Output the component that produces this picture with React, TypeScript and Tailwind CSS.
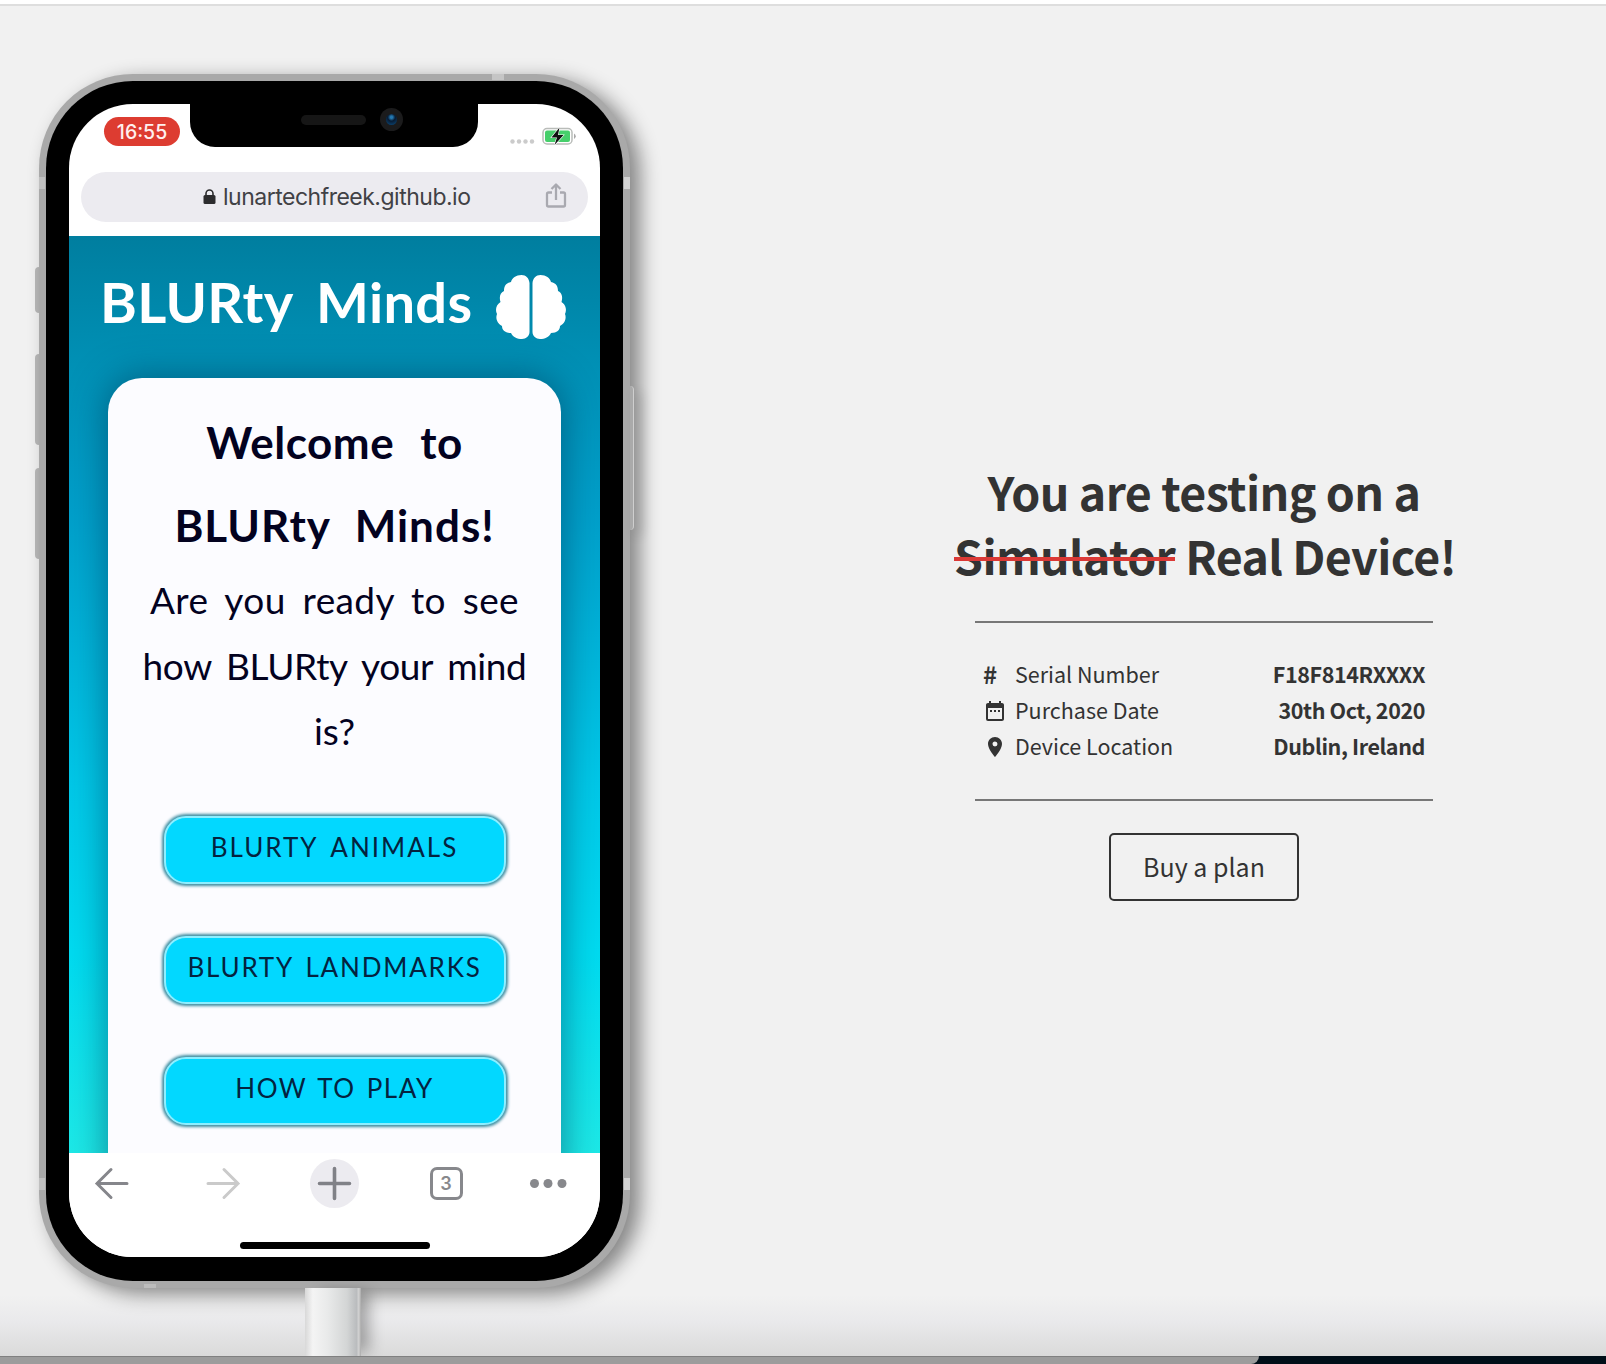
import React from "react";
import { MdDateRange, MdPlace } from "react-icons/md";

const hand = "font-['Lato','Open_Sans',sans-serif]";

function BrainIcon() {
  return (
    <svg viewBox="0 0 72 66" className="h-[66px] w-[72px]" fill="#fff">
      <path d="M34.500 9C34 4 31 1 26.500 1C21 1 17 4 16 8C11 9 9 12 9 17C5 19 4 23 5.500 28C1 31 0 36 2 40C0 45 3 50 7 52C7 56 10 59 16 59C18 63 22 65 27 65C31 65 34.500 62 34.500 58Z" />
      <path d="M37.500 9C38 4 41 1 45.500 1C51 1 55 4 56 8C61 9 63 12 63 17C67 19 68 23 66.500 28C71 31 72 36 70 40C72 45 69 50 65 52C65 56 62 59 56 59C54 63 50 65 45 65C41 65 37.500 62 37.500 58Z" />
    </svg>
  );
}

function StatusBar() {
  return (
    <div className="relative h-[68px] shrink-0">
      <div className="absolute left-[35px] top-[13px] flex h-[29px] w-[76px] items-center justify-center rounded-full bg-[#dd3c31] pt-[2px] font-['Inter',sans-serif] text-[19.5px] font-medium text-[#fff0ee]">
        16:55
      </div>
      <div className="absolute left-[121px] top-0 h-[43px] w-[288px] rounded-b-[25px] bg-black">
        <div className="absolute left-[111px] top-[11px] h-[10px] w-[65px] rounded-full bg-[#161616]" />
        <div className="absolute left-[190px] top-[4px] flex h-[23px] w-[23px] items-center justify-center rounded-full bg-[#1b1b1c]">
          <div className="h-[11px] w-[11px] rounded-full bg-[radial-gradient(circle_at_50%_30%,#2478b0_0_12%,#071b33_40%,#0b4675_90%)]" />
        </div>
      </div>
      <svg viewBox="0 0 68 20" className="absolute left-[440px] top-[22px] h-5 w-[68px]">
        <g fill="#cbcbcb">
          <circle cx="3.500" cy="15.500" r="2.200" />
          <circle cx="10" cy="15.500" r="2.200" />
          <circle cx="16.500" cy="15.500" r="2.200" />
          <circle cx="23" cy="15.500" r="2.200" />
        </g>
        <rect x="34" y="2.500" width="29" height="15.500" rx="4" fill="#fff" stroke="#b9bcb9" strokeWidth="1.500" />
        <rect x="36" y="4.500" width="25" height="11.500" rx="2" fill="#46cf6b" />
        <path d="M65 7.500q3.500 2.700 0 5.500z" fill="#a9a9a9" />
        <path d="M50.500 1.500L42.500 11.500H48L45.500 19L54.500 9H49Z" fill="#111" stroke="#fff" strokeWidth="1.200" paintOrder="stroke" />
      </svg>
    </div>
  );
}

function AddressBar() {
  return (
    <div className="relative mx-3 flex h-[50px] shrink-0 items-center rounded-full bg-[#ecebf0] pl-[122px]">
      <svg viewBox="0 0 13 16" className="mr-[7px] h-4 w-[13px]">
        <rect x="0.500" y="6" width="12" height="9" rx="1.500" fill="#2c2c2e" />
        <path d="M3 7V4.500a3.500 3.500 0 0 1 7 0V7" fill="none" stroke="#2c2c2e" strokeWidth="1.600" />
      </svg>
      <span className="font-['Inter',sans-serif] text-[23px] tracking-[-0.5px] text-[#414145]">lunartechfreek.github.io</span>
      <svg viewBox="0 0 22 26" className="absolute left-[464px] top-[10px] h-[26px] w-[22px]" fill="none" stroke="#a9a9b0" strokeWidth="2.300">
        <path d="M7 10.500H3.500Q2 10.500 2 12V23Q2 24.500 3.500 24.500H18.500Q20 24.500 20 23V12Q20 10.500 18.500 10.500H15M11 18V2.500M6.500 7L11 2.500L15.500 7" strokeLinejoin="round" />
      </svg>
    </div>
  );
}

function GameButton({ label, tracking }: { label: string; tracking: string }) {
  return (
    <div className={`flex h-[68px] w-[342px] items-center justify-center rounded-[22px] border-2 border-[#8deeff] bg-[#02d8ff] pb-[5px] text-[26px] text-[#04233f] shadow-[0_0_3px_2px_#3d8da1] ${tracking}`}>
      {label}
    </div>
  );
}

function GamePage() {
  return (
    <div className={`h-[917px] shrink-0 overflow-hidden bg-[linear-gradient(180deg,#007e9f_0%,#0090b5_14%,#009fca_30%,#00c8e8_60%,#00dbf0_78%,#1de9e7_100%)] ${hand}`}>
      <div className="flex h-[142px] pl-[31px]">
        <div className="mt-[31px] w-[395px] whitespace-nowrap text-[56px] font-bold leading-[70px] tracking-[0.3px] text-white [word-spacing:10px]">BLURty Minds</div>
        <div className="mt-[38px]">
          <BrainIcon />
        </div>
      </div>
      <div className="mx-[39px] h-[800px] rounded-t-[34px] bg-[#fcfcff] pt-[23px] text-center text-[#03021f] shadow-[0_0_34px_3px_rgba(0,55,85,0.5)]">
        <div className="whitespace-nowrap text-[44px] font-bold leading-[83px]">
          <div className="tracking-[0.5px] [word-spacing:15px]">Welcome to</div>
          <div className="tracking-[1px] [word-spacing:13px]">BLURty Minds!</div>
        </div>
        <div className="whitespace-nowrap text-[37px] leading-[65.500px]">
          <div className="tracking-[0.4px] [word-spacing:7px]">Are you ready to see</div>
          <div className="tracking-[-0.4px] [word-spacing:6px]">how BLURty your mind</div>
          <div>is?</div>
        </div>
        <div className="mt-[52px] flex flex-col items-center gap-[52.500px]">
          <GameButton label="BLURTY ANIMALS" tracking="tracking-[2px] [word-spacing:5px]" />
          <GameButton label="BLURTY LANDMARKS" tracking="tracking-[1.8px] [word-spacing:4px]" />
          <GameButton label="HOW TO PLAY" tracking="tracking-[1.5px] [word-spacing:3px]" />
        </div>
      </div>
    </div>
  );
}

function Toolbar() {
  return (
    <div className="relative h-[104px] bg-white">
      <svg viewBox="0 0 531 60" className="h-[60px] w-[531px]" fill="none" strokeWidth="3" strokeLinecap="round">
        <path d="M58 30.500H28M42 16.500L28 30.500L42 44.500" stroke="#85868b" />
        <path d="M139 30.500H169M155 16.500L169 30.500L155 44.500" stroke="#cacaca" />
        <circle cx="265.500" cy="30.500" r="24.500" fill="#ecebf0" />
        <path d="M250.500 30.500H280.500M265.500 15.500V45.500" stroke="#808187" strokeWidth="3.600" />
        <rect x="362.500" y="15.500" width="30" height="30" rx="5.500" stroke="#87888c" />
        <g fill="#87888c">
          <circle cx="465.500" cy="30.500" r="4.500" />
          <circle cx="479" cy="30.500" r="4.500" />
          <circle cx="493" cy="30.500" r="4.500" />
        </g>
      </svg>
      <span className="absolute left-[362px] top-[18px] w-[30px] text-center font-['Inter',sans-serif] text-[18px] font-semibold leading-[26px] text-[#87888c]">3</span>
      <div className="absolute left-[171px] top-[89px] h-[7px] w-[190px] rounded-full bg-black" />
    </div>
  );
}

function Phone() {
  return (
    <div className="relative ml-[39px] w-[591px]">
      <div className="absolute left-[-4px] top-[193px] h-[46px] w-2 rounded-l-sm bg-[#b8b8b8]" />
      <div className="absolute left-[-4px] top-[280px] h-[91px] w-2 rounded-l-sm bg-[#b8b8b8]" />
      <div className="absolute left-[-4px] top-[394px] h-[91px] w-2 rounded-l-sm bg-[#b8b8b8]" />
      <div className="relative h-[1214px] rounded-[94px] bg-[#a9a9a9] p-[7px] shadow-[10px_6px_20px_rgba(0,0,0,0.45)]">
        <div className="absolute left-0 top-[103px] h-[12px] w-[6px] bg-[#c0c0c0]" />
        <div className="absolute right-0 top-[103px] h-[12px] w-[6px] bg-[#d2d2d2]" />
        <div className="absolute left-0 top-[1104px] h-[12px] w-[6px] bg-[#c0c0c0]" />
        <div className="absolute right-0 top-[1104px] h-[12px] w-[6px] bg-[#d2d2d2]" />
        <div className="absolute left-[453px] top-0 h-[6px] w-[12px] bg-[#c5c5c5]" />
        <div className="absolute bottom-0 left-[105px] h-[4px] w-[12px] bg-[#bcbcbc]" />
        <div className="absolute right-[-4px] top-[312px] h-[144px] w-[4px] rounded-r-sm border-r border-[#cfcfcf] bg-[#aaaaaa] shadow-[7px_6px_12px_#00000038]" />
        <div className="h-[1200px] rounded-[87px] bg-black px-[23px] pt-[23px]">
          <div className="flex h-[1153px] w-[531px] flex-col overflow-hidden rounded-[64px] bg-white">
            <StatusBar />
            <AddressBar />
            <div className="h-[14px] shrink-0" />
            <GamePage />
            <Toolbar />
          </div>
        </div>
      </div>
      <div className="relative ml-[266px] h-[68px] w-[56px] bg-[linear-gradient(90deg,#d8d8d8,#f4f4f4_14%,#e9eaea_40%,#d3d5d5_75%,#babcbe_92%,#d2d2d2_96%,#aaa)] shadow-[12px_0_14px_-4px_rgba(0,0,0,0.3)]" />
    </div>
  );
}

function Row({ icon, label, value }: { icon: React.ReactNode; label: string; value: string }) {
  return (
    <div className="flex h-9 items-center whitespace-nowrap text-[21.500px]">
      <span className="flex w-8 items-center">{icon}</span>
      <span className="leading-9">{label}</span>
      <span className="ml-auto font-bold leading-9 tracking-[-0.4px]">{value}</span>
    </div>
  );
}

function DeviceInfo() {
  return (
    <div className="mt-[453px] w-[500px] font-['Noto_Sans_CJK_SC',sans-serif] text-[#333]">
      <h1 className="whitespace-nowrap text-center text-[46.500px] font-bold leading-[64px]">
        <div className="tracking-[-0.6px]">You are testing on a</div>
        <div className="tracking-[-0.63px]">
          <span className="relative">
            Simulator
            <span className="absolute inset-x-0 top-[36px] h-[4px] bg-[#db3936]" />
          </span>{" "}
          Real Device!
        </div>
      </h1>
      <div className="mx-auto mt-[34px] h-[180px] w-[458px] border-y-2 border-[#777] px-2 pt-[33px]">
        <Row icon={<span className="text-[24px] font-bold">#</span>} label="Serial Number" value="F18F814RXXXX" />
        <Row icon={<MdDateRange className="mt-[2px] h-6 w-6" />} label="Purchase Date" value="30th Oct, 2020" />
        <Row icon={<MdPlace className="mt-[2px] h-6 w-6" />} label="Device Location" value="Dublin, Ireland" />
      </div>
      <button className="mx-auto mt-8 block h-[68px] w-[190px] rounded-[5px] border-2 border-[#333] text-[25px]">Buy a plan</button>
    </div>
  );
}

export default function App() {
  return (
    <div className="flex h-[1364px] w-[1606px] flex-col overflow-hidden bg-[#f1f1f1]">
      <div className="h-[6px] shrink-0 border-b-2 border-[#dedede] bg-white" />
      <main className="flex h-[1350px] shrink-0 justify-between bg-[linear-gradient(180deg,#f1f1f1_0%,#f1f1f1_95.500%,#e9e9eb_97.500%,#dadada_100%)] pr-[152px]">
        <div className="pt-[68px]">
          <Phone />
        </div>
        <DeviceInfo />
      </main>
      <footer className="relative h-2 bg-[#000e18]">
        <div className="h-2 w-[1259px] rounded-br-[10px] border-t border-[#808080] bg-[#9c9c9c]" />
      </footer>
    </div>
  );
}
